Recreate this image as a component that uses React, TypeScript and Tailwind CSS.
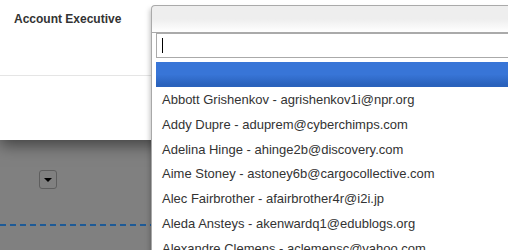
const people = [
  'Abbott Grishenkov - agrishenkov1i@npr.org',
  'Addy Dupre - aduprem@cyberchimps.com',
  'Adelina Hinge - ahinge2b@discovery.com',
  'Aime Stoney - astoney6b@cargocollective.com',
  'Alec Fairbrother - afairbrother4r@i2i.jp',
  'Aleda Ansteys - akenwardq1@edublogs.org',
  'Alexandre Clemens - aclemensc@yahoo.com',
]

export default function App() {
  return (
    <div className="relative w-[508px] h-[250px] overflow-hidden bg-[#808080] font-['Liberation_Sans',Arial,sans-serif]">
      {/* modal */}
      <div className="relative z-10 h-[140px] bg-white shadow-[0_5px_15px_rgba(0,0,0,0.5)]">
        <div className="h-[76px] border-b border-[#e5e5e5] pl-[14px] pt-[11px]">
          <p className="text-[12px] leading-[17px] font-bold text-[#333]">Account Executive</p>
        </div>
      </div>

      {/* dimmed page behind backdrop */}
      <div className="pt-[30px]">
        <div className="ml-[39px] w-[18px] h-[19px] rounded-[3px] border border-[#5e5e5e] flex items-center justify-center">
          <span className="block w-0 h-0 border-x-[4px] border-t-[4px] border-x-transparent border-t-black" />
        </div>
        <div className="mt-[35px] h-[2px] w-full bg-[repeating-linear-gradient(to_right,#1e5a96_0_6px,transparent_6px_10px)]" />
      </div>

      {/* select2 dropdown */}
      <div className="absolute z-20 left-[151px] top-[5px] w-[370px] shadow-[-1px_4px_5px_rgba(0,0,0,0.25)]">
        <div className="h-[28px] border border-r-0 border-[#aaa] rounded-tl-[4px] bg-[linear-gradient(to_top,#fff_0%,#eee_50%)]" />
        <div className="bg-white border-l border-[#a8a8a8] pb-[4px] h-[230px]">
          <div className="pl-[4px]">
            <div className="h-[25px] border border-r-0 border-[#aaa] flex items-center pl-[5px]">
              <span className="block w-px h-[15px] bg-black" />
            </div>
          </div>
          <ul className="mt-[4px] pl-[4px]">
            <li className="h-[25px] bg-[linear-gradient(to_bottom,#3875d7_50%,#2a62bc_90%)]" />
            {people.map(p => (
              <li key={p} className="pl-[6px] pt-[4px] pb-[3px] text-[13px] leading-[17.8px] text-[#333] whitespace-nowrap">
                {p}
              </li>
            ))}
          </ul>
        </div>
      </div>
    </div>
  )
}
